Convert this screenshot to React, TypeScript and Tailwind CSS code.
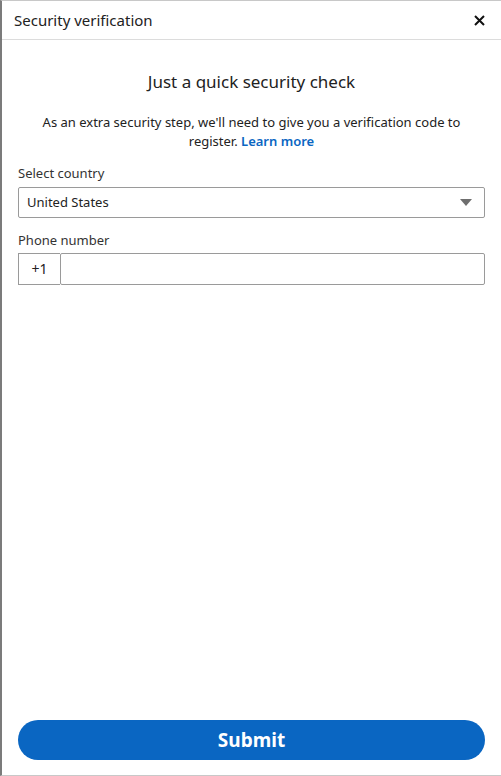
import React, { useState } from "react";

const App = () => {
  const [phone, setPhone] = useState("");

  return (
    <div
      className="h-[776px] w-[501px] flex flex-col bg-white border-l-2 border-l-[#7b7b7b] border-t border-t-[#c8c8c8] border-b border-b-[#c8c8c8] text-[#1f1f1f]"
      style={{ fontFamily: '"Noto Sans", "Open Sans", sans-serif' }}
    >
      {/* header */}
      <div className="h-[39px] flex items-center justify-between pl-3 pr-4 border-b border-[#dcdcdc]">
        <p className="text-[15px] text-[#222]">Security verification</p>
        <button type="button" className="text-[#111]">
          <svg width="11" height="11" viewBox="0 0 11 11">
            <path d="M1 1 L10 10 M10 1 L1 10" stroke="#111" strokeWidth="2" />
          </svg>
        </button>
      </div>

      {/* body */}
      <div className="flex-1 flex flex-col px-4">
        <p className="text-center text-[17px] mt-[29px] text-[#222]">
          Just a quick security check
        </p>
        <p className="text-center text-[13px] leading-[19px] mt-[18px] px-4 text-[#222]">
          As an extra security step, we'll need to give you a verification code to register.{" "}
          <a href="#" className="text-[#0a66c2] font-semibold">
            Learn more
          </a>
        </p>

        <p className="text-[13px] mt-[13px] text-[#333]">Select country</p>
        <div className="mt-[4px] h-[31px] flex items-center justify-between border border-[#9a9a9a] rounded-[2px] pl-2 pr-3">
          <span className="text-[13px] text-[#222]">United States</span>
          <svg width="12" height="7" viewBox="0 0 12 7">
            <path d="M0 0 L12 0 L6 7 Z" fill="#6e6e6e" />
          </svg>
        </div>

        <p className="text-[13px] mt-[13px] text-[#333]">Phone number</p>
        <div className="mt-[2px] flex h-[32px]">
          <div className="w-[42px] flex items-center justify-center border border-[#9a9a9a] border-r-0 text-[14px] text-[#222]">
            +1
          </div>
          <input
            type="tel"
            value={phone}
            onChange={(e) => setPhone(e.target.value)}
            className="flex-1 border border-[#9a9a9a] rounded-[2px] px-2 text-[13px] outline-none"
          />
        </div>

        <div className="flex-1" />

        <button
          type="button"
          className="mb-[15px] h-[40px] w-full rounded-full bg-[#0a66c2] text-white text-[19px] font-bold"
        >
          Submit
        </button>
      </div>
    </div>
  );
};

export default App;
